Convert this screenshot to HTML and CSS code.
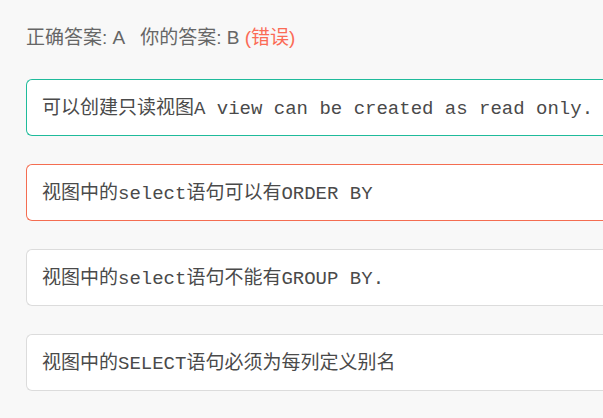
FILE: index.html
```html
<!DOCTYPE html>
<html lang="zh">
<head>
<meta charset="utf-8">
<link rel="stylesheet" href="styles.css">
</head>
<body>
<div class="page">
  <div class="result">
    <span>正确答案: A</span>
    <span class="mine">你的答案: B <span class="wrong">(错误)</span></span>
  </div>
  <ul class="options">
    <li class="option correct">可以创建只读视图A view can be created as read only.</li>
    <li class="option chosen">视图中的select语句可以有ORDER BY</li>
    <li class="option">视图中的select语句不能有GROUP BY.</li>
    <li class="option">视图中的SELECT语句必须为每列定义别名</li>
  </ul>
</div>
</body>
</html>
```
FILE: styles.css
```css
html, body {
  margin: 0;
  padding: 0;
  background: #f8f8f8;
  overflow: hidden;
}
.page {
  padding: 26px 0 0 26px;
  overflow: hidden;
}
.result {
  font-family: "Liberation Sans", "Noto Sans CJK SC", sans-serif;
  font-size: 19px;
  line-height: 24px;
  color: #666666;
  display: flex;
  gap: 15px;
}
.wrong {
  color: #fb6b55;
}
.options {
  list-style: none;
  margin: 29px -2px 0 0;
  padding: 0;
  display: flex;
  flex-direction: column;
  gap: 28px;
}
.option {
  box-sizing: border-box;
  height: 57px;
  padding: 0 15px 3px;
  display: flex;
  align-items: center;
  background: #ffffff;
  border: 1px solid #dcdcdc;
  border-right: none;
  border-radius: 6px 0 0 6px;
  font-family: "Liberation Mono", "Noto Sans CJK SC", monospace;
  font-size: 19px;
  color: #4a4a4a;
  white-space: nowrap;
  overflow: hidden;
}
.option.correct {
  border-color: #1fbb9b;
}
.option.chosen {
  border-color: #f46d51;
}
```
